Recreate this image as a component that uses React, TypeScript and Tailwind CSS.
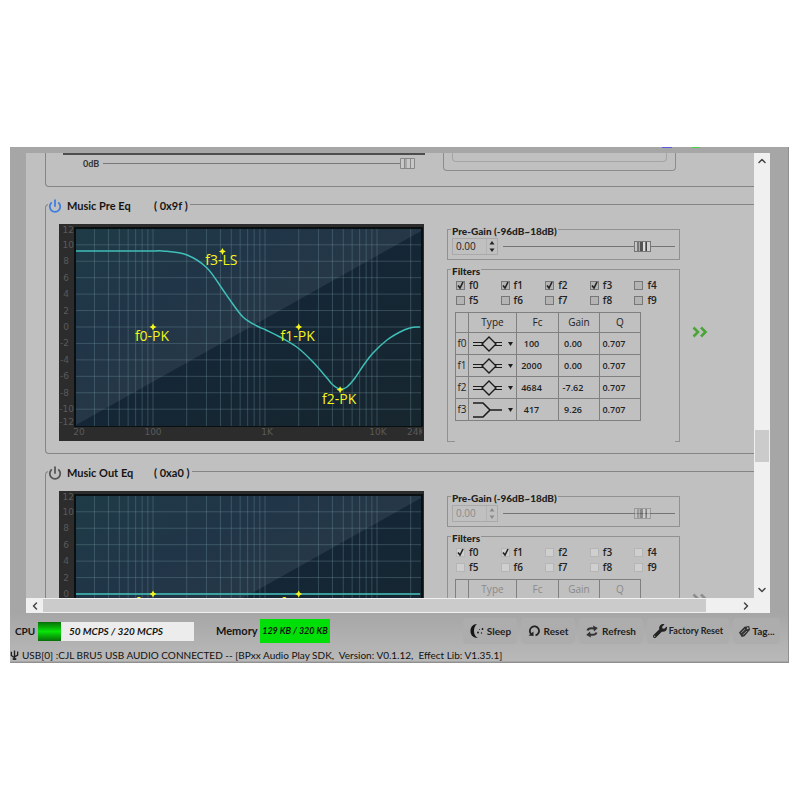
/**
 * Audio tuning window: the scrollable list of EQ effects, with the
 * DSP load meters, device actions and connection status underneath.
 */
import type { ReactNode } from "react";
import { ChevronDown, ChevronLeft, ChevronRight, ChevronUp, Power } from "lucide-react";
import { FaWrench } from "react-icons/fa";

type FilterKind = "peak" | "lowShelf";

interface FilterRow {
  name: string;
  kind: FilterKind;
  fc: string;
  gain: string;
  q: string;
}

interface Marker {
  label: string;
  hz: number;
  db: number;
}

interface EqPanelProps {
  id: string;
  title: string;
  address: string;
  enabled: boolean;
  checked: number;
  filters: FilterRow[];
  markers: Marker[];
  curve: number[][];
}

const PRE_FILTERS: FilterRow[] = [
  { name: "f0", kind: "peak", fc: "100", gain: "0.00", q: "0.707" },
  { name: "f1", kind: "peak", fc: "2000", gain: "0.00", q: "0.707" },
  { name: "f2", kind: "peak", fc: "4684", gain: "-7.62", q: "0.707" },
  { name: "f3", kind: "lowShelf", fc: "417", gain: "9.26", q: "0.707" },
];

const PRE_MARKERS: Marker[] = [
  { label: "f0-PK", hz: 100, db: 0 },
  { label: "f1-PK", hz: 2000, db: 0 },
  { label: "f2-PK", hz: 4684, db: -7.62 },
  { label: "f3-LS", hz: 417, db: 9.2 },
];

const OUT_MARKERS: Marker[] = [
  { label: "f0-PK", hz: 100, db: 0 },
  { label: "f1-PK", hz: 2000, db: 0 },
];

// Response samples in chart coordinates
const PRE_CURVE = [
  [17, 27], [90, 27], [104, 27], [128, 31], [148, 44], [164, 66], [171, 76], [184, 93],
  [198, 102], [207, 106], [221, 113], [239, 124], [254, 138], [268, 154], [274, 161],
  [281, 165], [288, 163], [296, 154], [304, 142], [314, 129], [328, 116], [341, 108],
  [351, 104], [361, 103],
];

const FLAT_CURVE = [[17, 103], [361, 103]];

const xOf = (hz: number) => 94 + 112 * Math.log10(hz / 100);
const yOf = (db: number) => 103 - db * 8.22;

const GRID_HZ = [10, 100, 1000, 10000]
  .flatMap((decade) => [1, 2, 3, 4, 5, 6, 7, 8, 9].map((n) => n * decade))
  .filter((hz) => hz > 20 && hz < 24000);

const GRID_DB = [10, 8, 6, 4, 2, 0, -2, -4, -6, -8, -10];

function smoothPath(points: number[][]) {
  let d = `M${points[0][0]} ${points[0][1]}`;
  for (let i = 0; i < points.length - 1; i++) {
    const a = points[Math.max(i - 1, 0)];
    const b = points[i];
    const c = points[i + 1];
    const e = points[Math.min(i + 2, points.length - 1)];
    d += `C${b[0] + (c[0] - a[0]) / 6} ${b[1] + (c[1] - a[1]) / 6} ${c[0] - (e[0] - b[0]) / 6} ${c[1] - (e[1] - b[1]) / 6} ${c[0]} ${c[1]}`;
  }
  return d;
}

function EqChart({ id, markers, curve }: { id: string; markers: Marker[]; curve: number[][] }) {
  return (
    <svg viewBox="0 0 365 217" className="h-[217px] w-[365px] shrink-0" role="img" aria-label="Frequency response">
      <defs>
        <linearGradient id={`${id}-lit`} x1="0" y1="0" x2="1" y2="1">
          <stop offset="0" stopColor="#1f3b47" />
          <stop offset="0.3" stopColor="#203547" />
          <stop offset="0.5" stopColor="#263847" />
        </linearGradient>
        <linearGradient id={`${id}-dark`} x1="0" y1="0" x2="1" y2="1">
          <stop offset="0.4" stopColor="#142637" />
          <stop offset="1" stopColor="#17262e" />
        </linearGradient>
        <clipPath id={`${id}-frame`}>
          <rect width="363" height="217" />
        </clipPath>
      </defs>
      <rect width="365" height="217" fill="#2c2c2c" />
      <rect x="15" y="3" width="349" height="200" fill="#0a0f12" />
      <rect x="17" y="5" width="345" height="197" fill={`url(#${id}-lit)`} />
      <polygon points="17,201 362,7 362,202 17,202" fill={`url(#${id}-dark)`} />
      <g stroke="#6f8f9c" strokeOpacity="0.36">
        {GRID_HZ.map((hz) => (
          <line key={hz} x1={xOf(hz)} x2={xOf(hz)} y1="5" y2="202" />
        ))}
        {GRID_DB.map((db) => (
          <line key={db} x1="17" x2="362" y1={yOf(db)} y2={yOf(db)} />
        ))}
      </g>
      <g fill="#5a5a5a" fontSize="9" fontFamily="DejaVu Sans, sans-serif" clipPath={`url(#${id}-frame)`}>
        <text x="15" y="9" textAnchor="end">12</text>
        {GRID_DB.map((db) => (
          <text key={db} x={Math.abs(db) === 10 ? 15 : 10} y={yOf(db) + 3} textAnchor="end">
            {db}
          </text>
        ))}
        <text x="15" y="201" textAnchor="end">-12</text>
        <text x="20" y="211" textAnchor="middle">20</text>
        <text x="94" y="211" textAnchor="middle">100</text>
        <text x="208" y="211" textAnchor="middle">1K</text>
        <text x="319" y="211" textAnchor="middle">10K</text>
        <text x="348" y="211">24K</text>
      </g>
      <path d={smoothPath(curve)} fill="none" stroke="#3fbfb8" strokeWidth="1.5" />
      {markers.map((m) => {
        const x = xOf(m.hz);
        const y = yOf(m.db);
        return (
          <g key={m.label} fill="#f4f41c">
            <path d={`M${x} ${y - 3.5}l1.200 2.300 2.300 1.200-2.300 1.200-1.200 2.300-1.200-2.300-2.300-1.200 2.300-1.200z`} />
            <text x={x - 1} y={y + 14} textAnchor="middle" fontSize="14" fontFamily="Open Sans, sans-serif">
              {m.label}
            </text>
          </g>
        );
      })}
    </svg>
  );
}

function FilterShape({ kind }: { kind: FilterKind }) {
  return (
    <svg viewBox="0 0 30 16" className="h-4 w-[30px]" fill="none" stroke="#1c1c1c" strokeWidth="1.4">
      {kind === "peak" ? (
        <>
          <path d="M9 8l7-7 7 7-7 7z" />
          <path d="M0 6.500h10M0 9.500h10M22 6.500h7M22 9.500h7" strokeWidth="1.200" />
        </>
      ) : (
        <path d="M0 1h10l7 7h12M0 15h10l7-7" strokeWidth="1.600" />
      )}
    </svg>
  );
}

function GroupBox({ title, className, children }: { title: string; className: string; children: ReactNode }) {
  return (
    <fieldset className={`min-w-0 border border-[#919191] ${className}`}>
      <legend className="ml-[3px] h-3 px-px font-['Lato',sans-serif] text-[10px] leading-4 font-black text-[#222]">{title}</legend>
      {children}
    </fieldset>
  );
}

function SliderThumb({ enabled }: { enabled: boolean }) {
  return (
    <svg viewBox="0 0 17 11" className={`absolute top-[3px] left-[76%] h-[11px] w-[17px] ${enabled ? "" : "opacity-50"}`}>
      <rect width="17" height="11" fill="#777" />
      <rect x="1" y="1" width="2" height="9" fill="#c4c4c4" />
      <rect x="5" y="1" width="1" height="9" fill="#aaa" />
      <rect x="6" y="1" width="3" height="9" fill="#555" />
      <rect x="9" y="1" width="2" height="9" fill="#ddd" />
      <rect x="12" y="1" width="1" height="9" fill="#444" />
      <rect x="13" y="1" width="3" height="9" fill="#d0d0d0" />
    </svg>
  );
}

function EqPanel({ id, title, address, enabled, checked, filters, markers, curve }: EqPanelProps) {
  const tone = enabled ? "text-[#222]" : "text-[#8a8a8a]";
  return (
    <fieldset className="mt-[10px] ml-[19px] h-[257px] min-w-0 shrink-0 rounded-l border border-r-0 border-[#858585]">
      <legend className="ml-[2px] flex h-[14px] items-center pt-1 pr-[2px] font-['Lato',sans-serif] text-[11px] leading-[14px] font-bold text-[#151515]">
        <button type="button" aria-label={`Toggle ${title}`} className="mr-[5px]">
          <Power size={14} strokeWidth={3} color={enabled ? "#3b7de0" : "#555"} />
        </button>
        <span className="w-[87px]">{title}</span>
        <span>( {address} )</span>
      </legend>
      <div className="flex pt-[13px] pl-[13px]">
        <EqChart id={id} markers={markers} curve={curve} />
        <div className="-mt-px ml-[23px] w-[233px] shrink-0 font-['Open_Sans',sans-serif] text-[10px]">
          <GroupBox title="Pre-Gain (-96dB~18dB)" className="h-[37px]">
            <div className="flex items-center px-1 pt-[3px]">
              <div className={`flex h-[17px] w-[46px] items-center border border-[#a9a9a9] ${tone}`}>
                <input
                  aria-label={`${title} pre-gain`}
                  defaultValue="0.00"
                  disabled={!enabled}
                  className="w-[34px] min-w-0 border-r border-[#b3b3b3] pl-[3px] leading-[15px] font-medium"
                />
                <svg viewBox="0 0 10 15" className="h-[15px] w-[10px]" fill="currentColor">
                  <path d="M5 2l2.500 3.500h-5zM5 13l2.500-3.500h-5z" />
                </svg>
              </div>
              <div className="relative ml-[5px] h-[17px] flex-1">
                <div className="mt-2 h-px bg-[#747474]" />
                <SliderThumb enabled={enabled} />
                <input type="range" aria-label={`${title} pre-gain slider`} min={-96} max={18} defaultValue={0} disabled={!enabled} className="absolute inset-0 w-full opacity-0" />
              </div>
            </div>
          </GroupBox>
          <div className="relative mt-[3px]">
            <GroupBox title="Filters" className="h-[179px] border-b-0">
              <div className="grid grid-cols-5 pt-[3px] pl-2">
                {Array.from({ length: 10 }, (_, i) => (
                  <label key={i} className="flex h-[15px] items-center gap-1 font-semibold text-[#222]">
                    <input
                      type="checkbox"
                      defaultChecked={i < checked}
                      disabled={!enabled}
                      className={`peer h-[9px] w-[9px] appearance-none border ${enabled ? "border-[#777] bg-[#b4b4b4]" : "border-[#b6b6b6] bg-[#cfcfcf]"}`}
                    />
                    <svg viewBox="0 0 9 9" className="-ml-[13px] hidden h-[9px] w-[9px] peer-checked:block" fill="none" stroke="#222" strokeWidth="1.6">
                      <path d="M2 4.500l2 2.500 3-6" />
                    </svg>
                    f{i}
                  </label>
                ))}
              </div>
              <table className={`mt-1 ml-[7px] table-fixed border-collapse text-center ${tone}`}>
                <thead>
                  <tr className="h-5">
                    <th className="w-[13px] border border-[#808080]" />
                    <th className="w-[48px] border border-[#808080] font-medium">Type</th>
                    <th className="w-[42px] border border-[#808080] font-medium">Fc</th>
                    <th className="w-[41px] border border-[#808080] font-medium">Gain</th>
                    <th className="w-[41px] border border-[#808080] font-medium">Q</th>
                  </tr>
                </thead>
                <tbody className="text-[9px] font-semibold">
                  {filters.map((f) => (
                    <tr key={f.name} className="h-[22px]">
                      <td className="border border-[#808080] text-[10px] font-medium">{f.name}</td>
                      <td className="border border-[#808080]">
                        <button type="button" aria-label={`${f.name} type`} className="flex w-full items-center pl-1">
                          <FilterShape kind={f.kind} />
                          <svg viewBox="0 0 5 4" className="ml-[5px] h-1 w-[5px]">
                            <path d="M0 0h5L2.500 4z" fill="#1c1c1c" />
                          </svg>
                        </button>
                      </td>
                      <td className="border border-[#808080] pr-3">{f.fc}</td>
                      <td className="border border-[#808080] pr-3">{f.gain}</td>
                      <td className="border border-[#808080] pr-3">{f.q}</td>
                    </tr>
                  ))}
                </tbody>
              </table>
            </GroupBox>
            <i className="absolute bottom-0 left-0 h-px w-2 bg-[#919191]" />
            <i className="absolute right-0 bottom-0 h-px w-[5px] bg-[#919191]" />
          </div>
        </div>
        <button type="button" aria-label="More settings" className="mt-[101px] ml-3 h-[13px] self-start">
          <svg viewBox="0 0 16 12" className="h-3 w-4" fill="none" stroke={enabled ? "#4aa538" : "#8d8d8d"} strokeWidth="2.6">
            <path d="M1.500 1.500L6 6l-4.500 4.500M9 1.500L13.500 6 9 10.500" />
          </svg>
        </button>
      </div>
    </fieldset>
  );
}

/** Lower edge of the effect above, scrolled mostly out of view. */
function GainPanel() {
  return (
    <section className="ml-[19px] flex h-[34px] shrink-0 rounded-bl border-b border-l border-[#858585]">
      <div className="ml-[17px] w-[362px]">
        <div className="h-[2px] bg-[#4d4d4d]" />
        <label className="flex h-[17px] items-center pl-5 font-['Lato',sans-serif] text-[9px] font-bold text-[#333]">
          0dB
          <span className="ml-1 h-px w-[297px] bg-[#777]" />
          <svg viewBox="0 0 15 11" className="h-[11px] w-[15px]" stroke="#888" fill="#c8c8c8">
            <path d="M.5.500h14v10H.500z" />
            <path d="M4.500 0v11M6 0v11M10.500 0v11" />
          </svg>
        </label>
      </div>
      <div className="ml-[18px] h-[18px] w-[233px] rounded-b border border-t-0 border-[#8c8c8c] px-2">
        <div className="h-[9px] rounded-b border border-t-0 border-[#a5a5a5]" />
      </div>
    </section>
  );
}

function MoonIcon() {
  return (
    <svg viewBox="0 0 16 16" className="h-4 w-4" fill="#151515">
      <path d="M8 1C4 1 1.500 4 1.500 8s2.500 7 7.500 7c-3-1.500-4-4-4-7s1-5.500 3-7z" />
      <circle cx="9" cy="9.500" r="0.900" />
      <circle cx="13.500" cy="6" r="0.900" />
      <circle cx="12.500" cy="10" r="0.700" />
      <circle cx="10.500" cy="6.500" r="0.500" />
    </svg>
  );
}

function ResetIcon() {
  return (
    <svg viewBox="0 0 12 12" className="h-3 w-3">
      <path d="M3.500 9.500A4.600 4.600 0 1 1 7.500 10.400" fill="none" stroke="#222" strokeWidth="1.800" />
      <path d="M.5 10.500l5 .5V6.500z" fill="#222" />
    </svg>
  );
}

function RefreshIcon() {
  return (
    <svg viewBox="0 0 12 13" className="h-[13px] w-3">
      <path d="M1.500 5.500C2 3.500 4 2.800 8 3.500M10.500 7.500C10 9.500 8 10.200 4 9.500" fill="none" stroke="#333" strokeWidth="2" />
      <path d="M7 .500L11.800 3 8 6.500zM5 12.500L.200 10 4 6.500z" fill="#333" />
    </svg>
  );
}

function TagIcon() {
  return (
    <svg viewBox="0 0 14 14" className="h-[13px] w-[13px]">
      <path d="M1 8l6-6 5-1 1 4-6 7-3 1z" fill="#333" />
      <path d="M3.500 8.500l4-4M5.500 10.500l4-4" stroke="#aaa" strokeWidth="0.900" />
      <circle cx="10.500" cy="3.500" r="1" fill="#aaa" />
    </svg>
  );
}

function UsbIcon() {
  return (
    <svg viewBox="0 0 10 12" className="h-3 w-[9px]" fill="none" stroke="#222" strokeWidth="1.5">
      <path d="M5 1v10M1.500 2.500v4L5 9M8.500 2v4L5 8" />
      <path d="M3 10.500h4" strokeWidth="2" />
    </svg>
  );
}

function ActionButton({ icon, label, className }: { icon: ReactNode; label: string; className: string }) {
  return (
    <button type="button" className={`flex h-[26px] items-center justify-center rounded-sm bg-[#adadad] text-[#222] ${className}`}>
      {icon}
      {label}
    </button>
  );
}

function StatusBar() {
  return (
    <footer className="bg-linear-to-b from-transparent to-[#b9b9b9] font-['Lato',sans-serif] font-bold text-[#151515]">
      <div className="flex h-[36px] items-center pr-2 pl-[5px] text-[11px]">
        <span className="w-[23px] text-[10px]">CPU</span>
        <div className="flex h-[19px] w-[156px] bg-[#ececec] text-[10px] leading-[19px] italic">
          <div className="w-[23px] bg-linear-to-b from-[#067006] via-[#08e408] to-[#067006]" />
          <span className="ml-2">50 MCPS / 320 MCPS</span>
        </div>
        <span className="ml-[22px] w-[44px]">Memory</span>
        <div className="h-6 w-[70px] bg-[#00df08] text-center text-[9px] leading-6 whitespace-nowrap italic">129 KB / 320 KB</div>
        <div className="ml-auto flex items-center gap-1 text-[10px]">
          <ActionButton label="Sleep" className="w-[54px] gap-[2px]" icon={<MoonIcon />} />
          <ActionButton label="Reset" className="w-[54px] gap-1" icon={<ResetIcon />} />
          <ActionButton label="Refresh" className="w-[64px] gap-1" icon={<RefreshIcon />} />
          <ActionButton label="Factory Reset" className="w-[82px] gap-[2px] text-[9px]" icon={<FaWrench size={14} />} />
          <ActionButton label="Tag..." className="w-[47px] gap-px" icon={<TagIcon />} />
        </div>
      </div>
      <div className="flex h-3 items-center gap-[3px] text-[10px] leading-3 font-normal whitespace-pre text-[#111]">
        <UsbIcon />
        {"USB[0] :CJL BRU5 USB AUDIO CONNECTED -- [BPxx Audio Play SDK,  Version: V0.1.12,  Effect Lib: V1.35.1]"}
      </div>
    </footer>
  );
}

export default function App() {
  return (
    <div className="min-h-screen bg-white pt-[147px] pr-[11px] pl-[10px]">
      <main className="border-r border-b border-[#909090] bg-[#a6a6a6] pb-px">
        <div className="flex h-[6px] items-start justify-end pr-[88px]">
          <span className="mr-5 h-px w-[10px] bg-[#5b5be0]" />
          <span className="h-px w-2 bg-[#48d048]" />
        </div>
        <div className="mr-[18px] ml-4">
          <div className="flex h-[445px]">
            <div className="flex min-w-0 flex-1 flex-col overflow-hidden bg-[#c1c0c0]">
              <GainPanel />
              <EqPanel id="pre" title="Music Pre Eq" address="0x9f" enabled checked={4} filters={PRE_FILTERS} markers={PRE_MARKERS} curve={PRE_CURVE} />
              <EqPanel id="out" title="Music Out Eq" address="0xa0" enabled={false} checked={2} filters={[]} markers={OUT_MARKERS} curve={FLAT_CURVE} />
            </div>
            <div className="flex w-4 flex-col items-center bg-[#f1f0f1] text-[#444]">
              <button type="button" aria-label="Scroll up" className="flex h-4 items-center">
                <ChevronUp size={12} strokeWidth={3} />
              </button>
              <div className="mt-[261px] h-8 w-[14px] bg-[#cbcbcb]" />
              <button type="button" aria-label="Scroll down" className="mt-auto flex h-4 items-center">
                <ChevronDown size={12} strokeWidth={3} />
              </button>
            </div>
          </div>
          <div className="flex h-[15px] items-center bg-[#f1f0f1] text-[#444]">
            <button type="button" aria-label="Scroll left" className="flex w-[17px] justify-center">
              <ChevronLeft size={12} strokeWidth={3} />
            </button>
            <div className="mr-[34px] h-[13px] flex-1 bg-[#cbcbcb]" />
            <button type="button" aria-label="Scroll right" className="mr-[18px] flex">
              <ChevronRight size={12} strokeWidth={3} />
            </button>
          </div>
        </div>
        <StatusBar />
      </main>
    </div>
  );
}
